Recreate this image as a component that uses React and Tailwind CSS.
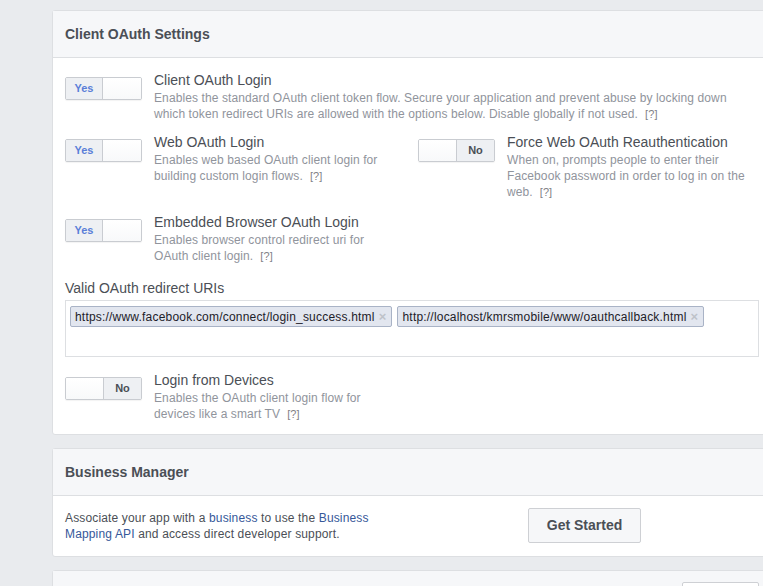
import React from "react";

const font = { fontFamily: '"Liberation Sans", Arial, Helvetica, sans-serif' };

function Toggle({ on }) {
  return (
    <div className="flex h-[23px] w-[77px] flex-none overflow-hidden rounded-[2px] border border-[#c9ccd1] bg-white shadow-[0_1px_1px_rgba(0,0,0,0.05)]">
      {on ? (
        <>
          <div className="flex w-[37px] items-center justify-center border-r border-[#c9ccd1] bg-[#eef0f3] text-[11px] font-bold text-[#5b7fd8]">
            Yes
          </div>
          <div className="flex-1 bg-gradient-to-b from-white to-[#f8f9fa]" />
        </>
      ) : (
        <>
          <div className="w-[38px] border-r border-[#c9ccd1] bg-gradient-to-b from-white to-[#f8f9fa]" />
          <div className="flex flex-1 items-center justify-center bg-[#eef0f3] text-[11px] font-bold text-[#4b4f56]">
            No
          </div>
        </>
      )}
    </div>
  );
}

function Help() {
  return <span className="ml-[7px] text-[11px] text-[#7f8186]">[?]</span>;
}

function Setting({ on, title, children, textWidth }) {
  return (
    <div className="flex items-start">
      <div className="mt-[7px]">
        <Toggle on={on} />
      </div>
      <div className={"ml-[12px] " + textWidth}>
        <div className="text-[14px] leading-[20px] text-[#4b4f56]">{title}</div>
        <div className="text-[12px] leading-[16px] tracking-[0.1px] text-[#90949c]">
          {children}
          <Help />
        </div>
      </div>
    </div>
  );
}

function Token({ children }) {
  return (
    <div className="flex h-[21px] items-center rounded-[2px] border border-[#a9b3c6] bg-[#e2e6ef] pl-[4px] pr-[5px] text-[12px] tracking-[0.2px] text-[#1d2129]">
      {children}
      <span className="ml-[4px] text-[13px] font-bold leading-none text-[#bec2c9]">×</span>
    </div>
  );
}

function Card({ title, right, children }) {
  return (
    <div className="w-[720px] rounded-[3px] border border-[#dddfe2] bg-white">
      <div className="flex h-[47px] items-center justify-between border-b border-[#dddfe2] bg-[#f6f7f9] px-[12px]">
        <div className="text-[14px] font-bold leading-[20px] text-[#4b4f56]">{title}</div>
        {right}
      </div>
      {children}
    </div>
  );
}

export default function App() {
  return (
    <div className="h-[586px] w-full overflow-hidden bg-[#e9ebee]" style={font}>
      <div className="flex flex-col gap-[13px] pl-[52px] pt-[10px]">
        <Card title="Client OAuth Settings">
          <div className="px-[12px] pb-[12px] pt-[12px]">
            <Setting on title="Client OAuth Login" textWidth="flex-1">
              Enables the standard OAuth client token flow. Secure your application and prevent abuse by
              locking down which token redirect URIs are allowed with the options below. Disable globally if
              not used.
            </Setting>

            <div className="mt-[10px] grid grid-cols-[353px_1fr]">
              <Setting on title="Web OAuth Login" textWidth="w-[240px]">
                Enables web based OAuth client login for building custom login flows.
              </Setting>
              <Setting on={false} title="Force Web OAuth Reauthentication" textWidth="w-[254px]">
                When on, prompts people to enter their Facebook password in order to log in on the web.
              </Setting>
            </div>

            <div className="mt-[12px]">
              <Setting on title="Embedded Browser OAuth Login" textWidth="w-[240px]">
                Enables browser control redirect uri for OAuth client login.
              </Setting>
            </div>

            <div className="mt-[14px] text-[14px] leading-[20px] text-[#4b4f56]">Valid OAuth redirect URIs</div>
            <div className="mt-[2px] flex h-[57px] items-start gap-[5px] border border-[#dddfe2] px-[4px] pt-[5px]">
              <Token>https://www.facebook.com/connect/login_success.html</Token>
              <Token>http://localhost/kmrsmobile/www/oauthcallback.html</Token>
            </div>

            <div className="mt-[13px]">
              <Setting on={false} title="Login from Devices" textWidth="w-[240px]">
                Enables the OAuth client login flow for devices like a smart TV
              </Setting>
            </div>
          </div>
        </Card>

        <Card title="Business Manager">
          <div className="grid grid-cols-[463px_auto] items-center px-[12px] pb-[13px] pt-[12px]">
            <p className="w-[320px] text-[12px] leading-[16px] tracking-[0.15px] text-[#4b4f56]">
              Associate your app with a <span className="text-[#365899]">business</span> to use the{" "}
              <span className="text-[#365899]">Business Mapping API</span> and access direct developer support.
            </p>
            <button className="h-[35px] w-[113px] rounded-[2px] border border-[#ced0d4] bg-[#f6f7f9] text-[14px] font-bold text-[#4b4f56]">
              Get Started
            </button>
          </div>
        </Card>

        <Card
          title=""
          right={<div className="h-[24px] w-[77px] rounded-[2px] border border-[#ced0d4] bg-white" />}
        >
          <div className="h-[40px]" />
        </Card>
      </div>
    </div>
  );
}
